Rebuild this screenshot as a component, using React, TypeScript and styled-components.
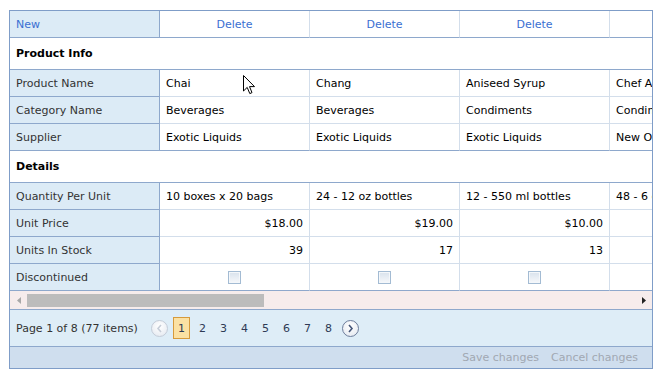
import React from "react";
import styled, { createGlobalStyle } from "styled-components";

const colors = {
    outer: "#7f9dc8",
    dark: "#8ea8cc",
    light: "#d3deeb",
    headBg: "#dcebf6",
    pagerBg: "#deedf7",
    footerBg: "#cfdeee",
    link: "#3a6fd2",
    label: "#333333",
    text: "#000000",
};

const GlobalStyle = createGlobalStyle`
    html, body {
        margin: 0;
        padding: 0;
        background: #ffffff;
    }
    body {
        font-family: "DejaVu Sans", Verdana, sans-serif;
        font-size: 11px;
    }
`;

const Page = styled.div`
    position: relative;
    width: 664px;
    height: 376px;
    padding: 10px 0 0 9px;
    box-sizing: border-box;
`;

const Grid = styled.div`
    width: 644px;
    box-sizing: border-box;
    border: 1px solid ${colors.outer};
    overflow: hidden;
`;

const Row = styled.div`
    display: grid;
    grid-template-columns: 150px repeat(4, 150px);
    height: 27px;
`;

const LabelCell = styled.div<{ $link?: boolean }>`
    box-sizing: border-box;
    display: flex;
    align-items: center;
    padding: 0 6px;
    background: ${colors.headBg};
    color: ${p => (p.$link ? colors.link : colors.label)};
    border-right: 1px solid ${colors.dark};
    border-bottom: 1px solid ${colors.dark};
    white-space: nowrap;
`;

const DataCell = styled.div<{ $align?: "left" | "right" | "center"; $last?: boolean; $link?: boolean }>`
    box-sizing: border-box;
    display: flex;
    align-items: center;
    justify-content: ${p => (p.$align === "right" ? "flex-end" : p.$align === "center" ? "center" : "flex-start")};
    padding: 0 6px;
    background: #ffffff;
    color: ${p => (p.$link ? colors.link : colors.text)};
    border-right: 1px solid ${colors.light};
    border-bottom: 1px solid ${p => (p.$last ? colors.dark : colors.light)};
    white-space: nowrap;
    overflow: hidden;
`;

const GroupRow = styled.div`
    box-sizing: border-box;
    height: 32px;
    display: flex;
    align-items: center;
    padding: 0 6px;
    font-weight: bold;
    color: ${colors.text};
    background: #ffffff;
    border-bottom: 1px solid ${colors.dark};
`;

const Checkbox = styled.span`
    box-sizing: border-box;
    width: 13px;
    height: 13px;
    border: 1px solid #a3bbd3;
    background: linear-gradient(#d9e2ec, #f6f8fb);
    box-shadow: inset 0 0 0 1px #f4f7fa;
`;

const ScrollBar = styled.div`
    box-sizing: border-box;
    height: 19px;
    display: flex;
    align-items: center;
    background: #f6ecec;
    border-bottom: 1px solid ${colors.dark};
`;

const ScrollArrow = styled.div`
    width: 17px;
    height: 18px;
    display: flex;
    align-items: center;
    justify-content: center;
`;

const Thumb = styled.div`
    width: 237px;
    height: 13px;
    background: #bcbcbc;
`;

const Pager = styled.div`
    box-sizing: border-box;
    height: 37px;
    display: flex;
    align-items: center;
    padding: 0 6px;
    background: ${colors.pagerBg};
    border-bottom: 1px solid ${colors.dark};
    color: #333333;
`;

const Summary = styled.span`
    margin-right: 10px;
`;

const NavButton = styled.span<{ $disabled?: boolean }>`
    box-sizing: border-box;
    width: 17px;
    height: 17px;
    border-radius: 50%;
    display: flex;
    align-items: center;
    justify-content: center;
    border: 1px solid ${p => (p.$disabled ? "#c4ccd8" : "#6e7e9c")};
    background: radial-gradient(circle at 50% 35%, #ffffff, #e2e7ef);
    color: ${p => (p.$disabled ? "#c6cdd8" : "#46577a")};
    margin: 0 3px;
`;

const PageNum = styled.span<{ $current?: boolean }>`
    box-sizing: border-box;
    width: 17px;
    height: 22px;
    display: flex;
    align-items: center;
    justify-content: center;
    margin: 0 2px;
    border: 1px solid ${p => (p.$current ? "#d69a3c" : "transparent")};
    background: ${p => (p.$current ? "#fbe1a3" : "transparent")};
    color: #2e3a55;
`;

const Footer = styled.div`
    height: 21px;
    display: flex;
    align-items: center;
    justify-content: flex-end;
    gap: 12px;
    padding-right: 14px;
    background: ${colors.footerBg};
    color: #a1a8b2;
`;

const Pointer = styled.svg`
    position: absolute;
    left: 243px;
    top: 75px;
`;

type Product = {
    name: string;
    category: string;
    supplier: string;
    qty: string;
    price: string;
    stock: number;
};

const products: Product[] = [
    { name: "Chai", category: "Beverages", supplier: "Exotic Liquids", qty: "10 boxes x 20 bags", price: "$18.00", stock: 39 },
    { name: "Chang", category: "Beverages", supplier: "Exotic Liquids", qty: "24 - 12 oz bottles", price: "$19.00", stock: 17 },
    { name: "Aniseed Syrup", category: "Condiments", supplier: "Exotic Liquids", qty: "12 - 550 ml bottles", price: "$10.00", stock: 13 },
    { name: "Chef Anton's Cajun Seasoning", category: "Condiments", supplier: "New Orleans Cajun Delights", qty: "48 - 6 oz jars", price: "$22.00", stock: 53 },
];

type Field = {
    label: string;
    value: (p: Product) => React.ReactNode;
    align?: "left" | "right" | "center";
    last?: boolean;
};

const infoFields: Field[] = [
    { label: "Product Name", value: p => p.name },
    { label: "Category Name", value: p => p.category },
    { label: "Supplier", value: p => p.supplier, last: true },
];

const detailFields: Field[] = [
    { label: "Quantity Per Unit", value: p => p.qty },
    { label: "Unit Price", value: p => p.price, align: "right" },
    { label: "Units In Stock", value: p => p.stock, align: "right" },
    { label: "Discontinued", value: () => <Checkbox />, align: "center", last: true },
];

const FieldRows = ({ fields }: { fields: Field[] }) => <>
    {fields.map(f => <Row key={f.label}>
        <LabelCell>{f.label}</LabelCell>
        {products.map(p => <DataCell key={p.name} $align={f.align} $last={f.last}>
            {f.value(p)}
        </DataCell>)}
    </Row>)}
</>;

const Chevron = ({ dir }: { dir: "left" | "right" }) => <svg width="7" height="9" viewBox="0 0 7 9">
    <polyline
        points={dir === "left" ? "5,1 2,4.5 5,8" : "2,1 5,4.5 2,8"}
        fill="none"
        stroke="currentColor"
        strokeWidth="1.6"
    />
</svg>;

const App = () => {
    return <Page>
        <GlobalStyle />
        <Grid>
            <Row>
                <LabelCell $link>New</LabelCell>
                {products.map(p => <DataCell key={p.name} $align="center" $link $last>Delete</DataCell>)}
            </Row>
            <GroupRow>Product Info</GroupRow>
            <FieldRows fields={infoFields} />
            <GroupRow>Details</GroupRow>
            <FieldRows fields={detailFields} />
            <ScrollBar>
                <ScrollArrow>
                    <svg width="4" height="7" viewBox="0 0 4 7"><polygon points="4,0 0,3.5 4,7" fill="#a8a8a8" /></svg>
                </ScrollArrow>
                <Thumb />
                <div style={{ flex: 1 }} />
                <ScrollArrow>
                    <svg width="4" height="7" viewBox="0 0 4 7"><polygon points="0,0 4,3.5 0,7" fill="#222222" /></svg>
                </ScrollArrow>
            </ScrollBar>
            <Pager>
                <Summary>Page 1 of 8 (77 items)</Summary>
                <NavButton $disabled><Chevron dir="left" /></NavButton>
                {[1, 2, 3, 4, 5, 6, 7, 8].map(n => <PageNum key={n} $current={n === 1}>{n}</PageNum>)}
                <NavButton><Chevron dir="right" /></NavButton>
            </Pager>
            <Footer>
                <span>Save changes</span>
                <span>Cancel changes</span>
            </Footer>
        </Grid>
        <Pointer width="13" height="20" viewBox="0 0 13 20">
            <path d="M0.5 0.5 L0.5 16 L4.2 12.4 L6.8 18.6 L9 17.6 L6.5 11.6 L11.5 11.6 Z" fill="#ffffff" stroke="#000000" strokeWidth="1" strokeLinejoin="round" />
        </Pointer>
    </Page>;
};

export default App;
